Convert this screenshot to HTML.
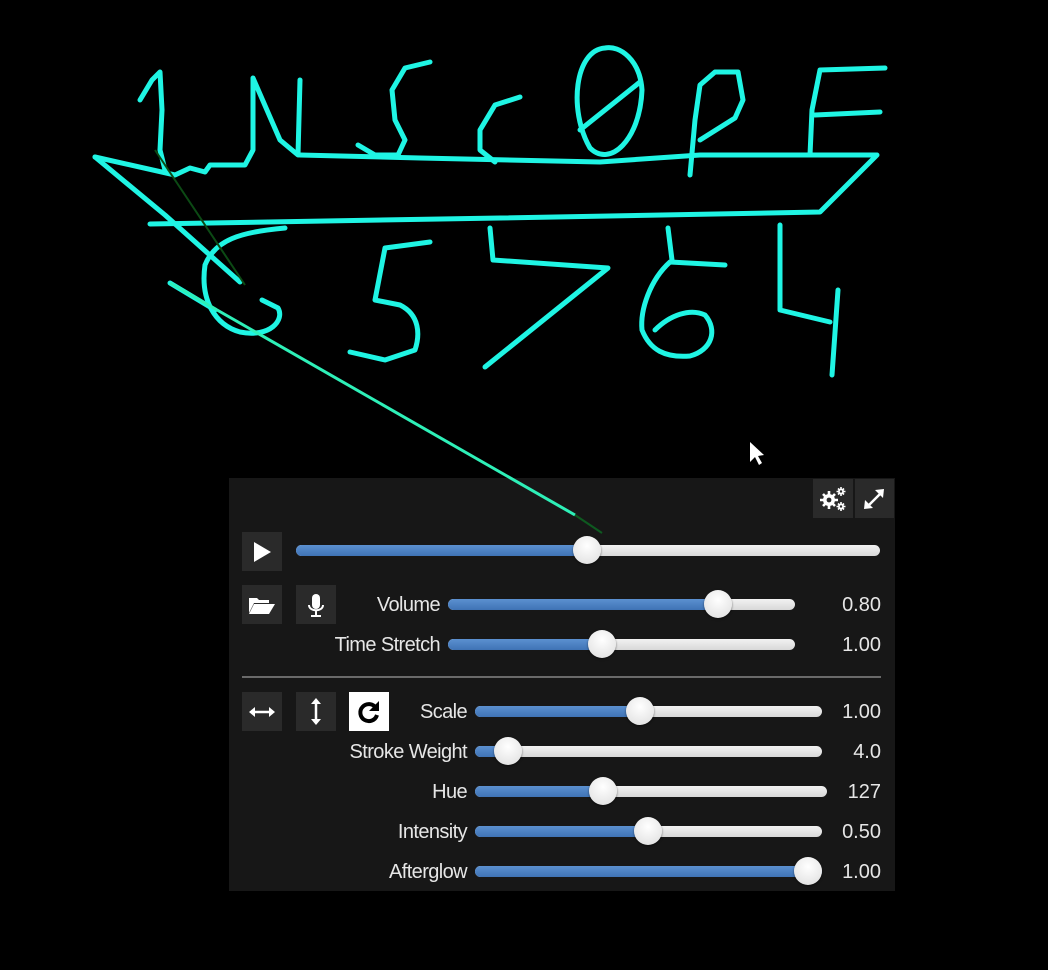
<!DOCTYPE html>
<html><head><meta charset="utf-8"><style>
html,body{margin:0;padding:0;background:#000;width:1048px;height:970px;overflow:hidden;font-family:"Liberation Sans",sans-serif}
.abs{position:absolute}
#panel{position:absolute;left:229px;top:478px;width:666px;height:413px;background:#171717}
.btn{position:absolute;width:40px;height:39px;background:#2a2a2a}
.track{position:absolute;height:11px;border-radius:6px;background:linear-gradient(#f2f2f2,#d8d8d8)}
.fill{position:absolute;left:0;top:0;height:11px;border-radius:6px;background:linear-gradient(#5b90d0,#3f73b5)}
.thumb{position:absolute;width:28px;height:28px;border-radius:50%;background:radial-gradient(circle at 50% 35%,#fff,#ddd);top:-9px;margin-left:-14px;box-shadow:0 1px 2px rgba(0,0,0,.5)}
.lbl{position:absolute;color:#e6e6e6;font-size:20px;text-align:right;width:200px;letter-spacing:-0.6px}
.val{position:absolute;color:#e6e6e6;font-size:20px;text-align:right;width:60px;left:592px}
</style></head><body>
<svg class="abs" style="left:0;top:0" width="1048" height="970">
<g fill="none" stroke="#1ff5e4" stroke-width="5" stroke-linecap="round" stroke-linejoin="round">
<path d="M140 100 L152 80 L160 72 L162 110 L160 150 L165 170"/>
<path d="M95 157 L175 175 L190 168 L205 172 L210 165 L245 165 L253 150 L253 78 L280 140 L298 155 L300 80"/>
<path d="M95 157 L165 215 L240 282"/>
<path d="M300 155 L420 158 L600 162 L700 155 L877 155 L820 212 L500 218 L150 224"/>
<path d="M430 62 L405 68 L392 90 L395 120 L405 140 L398 155 L375 155 L358 145"/>
<path d="M520 97 L495 105 L480 130 L480 150 L495 162"/>
<path d="M605 48 C575 50 568 110 590 148 C610 168 640 140 642 90 C640 60 620 45 605 48 Z"/>
<path d="M580 130 L640 82"/>
<path d="M690 175 L695 120 L700 85 L715 72 L738 72 L743 100 L735 118 L700 140"/>
<path d="M885 68 L820 70 L812 110 L810 155"/>
<path d="M880 112 L815 115"/>
<path d="M285 228 C240 232 215 240 205 265 C200 300 215 325 240 332 C270 338 285 320 278 308 L262 300"/>
<path d="M170 283 L215 310"/>
<path d="M430 242 L385 248 L375 300 L400 305 C420 315 420 335 415 350 L385 360 L350 352"/>
<path d="M490 228 L493 260 L608 268 L485 367"/>
<path d="M725 265 L670 262 C650 280 640 310 642 330 C650 350 665 358 690 356 C712 350 718 330 705 315 C690 308 670 315 655 330"/>
<path d="M668 228 L672 260"/>
<path d="M780 225 L780 310 L830 322"/>
<path d="M838 290 L832 375"/>
</g>
<path d="M155 150 L245 285" stroke="#0c4a14" stroke-width="2" fill="none"/>
<path d="M750 442 L750 462 L755 457 L759 465 L762 463 L758 456 L764 455 Z" fill="#fff"/>
</svg>
<div id="panel">
<div class="btn" style="left:584px;top:1px"><svg width="40" height="39"><g stroke="#fff" stroke-width="2.6"><path d="M16 12v18M7 21h18M10 15l12 12M22 15l-12 12"/></g><circle cx="16" cy="21" r="6" fill="#fff"/><circle cx="16" cy="21" r="2.4" fill="#2a2a2a"/><g stroke="#fff" stroke-width="1.6"><path d="M28 8v9M23.5 12.5h9M25 9.5l6 6M31 9.5l-6 6M28 23v9M23.5 27.5h9M25 24.5l6 6M31 24.5l-6 6"/></g><circle cx="28" cy="12.5" r="3" fill="#fff"/><circle cx="28" cy="27.5" r="3" fill="#fff"/><circle cx="28" cy="12.5" r="1.2" fill="#2a2a2a"/><circle cx="28" cy="27.5" r="1.2" fill="#2a2a2a"/></svg></div>
<div class="btn" style="left:626px;top:1px;width:39px"><svg width="39" height="39"><g stroke="#fff" stroke-width="2.5" fill="none"><path d="M12 28L27 13"/></g><path d="M29 10l-1 9-8-8z M9 30l1-9 8 8z" fill="#fff"/></svg></div>
<div class="btn" style="left:13px;top:54px"><svg width="40" height="39"><path d="M12 10L29 20 12 30Z" fill="#fff"/></svg></div>
<div class="track" style="left:67px;top:67px;width:584px"><div class="fill" style="width:292px"></div><div class="thumb" style="left:291px"></div></div>
<div class="btn" style="left:13px;top:107px"><svg width="40" height="39"><path d="M7 13h8l2 2h10v3H12l-5 10z" fill="#fff"/><path d="M12 19h21l-6 10H7z" fill="#fff"/></svg></div>
<div class="btn" style="left:67px;top:107px"><svg width="40" height="39"><rect x="16" y="9" width="8" height="15" rx="4" fill="#fff"/><path d="M13 20c0 7 14 7 14 0M20 26v4M15 31h10" stroke="#fff" stroke-width="2" fill="none"/></svg></div>
<div class="lbl" style="left:11px;top:116px">Volume</div>
<div class="track" style="left:219px;top:121px;width:347px"><div class="fill" style="width:270px"></div><div class="thumb" style="left:270px"></div></div>
<div class="val" style="top:116px">0.80</div>
<div class="lbl" style="left:11px;top:156px">Time Stretch</div>
<div class="track" style="left:219px;top:161px;width:347px"><div class="fill" style="width:154px"></div><div class="thumb" style="left:154px"></div></div>
<div class="val" style="top:156px">1.00</div>
<div class="abs" style="left:13px;top:198px;width:639px;height:2px;background:#6a6a6a"></div>
<div class="btn" style="left:13px;top:214px"><svg width="40" height="39"><path d="M10 20h20" stroke="#fff" stroke-width="2.5"/><path d="M7 20l6-5v10zM33 20l-6-5v10z" fill="#fff"/></svg></div>
<div class="btn" style="left:67px;top:214px"><svg width="40" height="39"><path d="M20 10v19" stroke="#fff" stroke-width="2.5"/><path d="M20 6l-5 6h10zM20 33l-5-6h10z" fill="#fff"/></svg></div>
<div class="btn" style="left:120px;top:214px;background:#fff"><svg width="40" height="39"><path d="M27 16A8.5 8.5 0 1 0 28 23" stroke="#000" stroke-width="4" fill="none"/><path d="M30 9v10h-10z" fill="#000"/></svg></div>
<div class="lbl" style="left:38px;top:223px">Scale</div>
<div class="track" style="left:246px;top:228px;width:347px"><div class="fill" style="width:165px"></div><div class="thumb" style="left:165px"></div></div>
<div class="val" style="top:223px">1.00</div>
<div class="lbl" style="left:38px;top:263px">Stroke Weight</div>
<div class="track" style="left:246px;top:268px;width:347px"><div class="fill" style="width:33px"></div><div class="thumb" style="left:33px"></div></div>
<div class="val" style="top:263px">4.0</div>
<div class="lbl" style="left:38px;top:303px">Hue</div>
<div class="track" style="left:246px;top:308px;width:352px"><div class="fill" style="width:128px"></div><div class="thumb" style="left:128px"></div></div>
<div class="val" style="top:303px">127</div>
<div class="lbl" style="left:38px;top:343px">Intensity</div>
<div class="track" style="left:246px;top:348px;width:347px"><div class="fill" style="width:173px"></div><div class="thumb" style="left:173px"></div></div>
<div class="val" style="top:343px">0.50</div>
<div class="lbl" style="left:38px;top:383px">Afterglow</div>
<div class="track" style="left:246px;top:388px;width:347px"><div class="fill" style="width:347px"></div><div class="thumb" style="left:333px"></div></div>
<div class="val" style="top:383px">1.00</div>
</div>
<svg class="abs" style="left:0;top:0;pointer-events:none" width="1048" height="970">
<path d="M170 283 L575 515" stroke="#2ef0b8" stroke-width="3" fill="none"/>
<path d="M575 515 L602 533" stroke="#0e5a20" stroke-width="2" fill="none"/>
</svg>
</body></html>
